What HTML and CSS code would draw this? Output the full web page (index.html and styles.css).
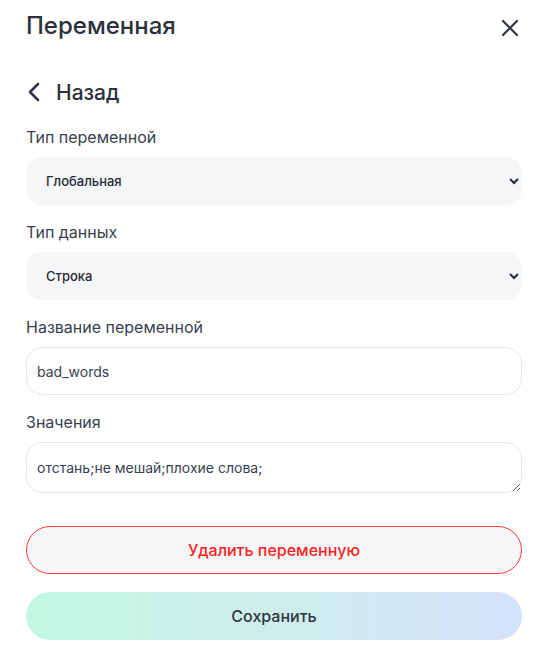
FILE: index.html
```html
<!DOCTYPE html>
<html lang="ru">
<head>
<meta charset="utf-8">
<link rel="stylesheet" href="styles.css">
</head>
<body>
<div class="panel">
  <div class="header">
    <h1 class="title">Переменная</h1>
    <button class="close" aria-label="Закрыть">
      <svg width="18" height="18" viewBox="0 0 18 18"><path d="M2 2L16 16M16 2L2 16" stroke="#2f3542" stroke-width="2.2" stroke-linecap="round" fill="none"/></svg>
    </button>
  </div>
  <div class="back">
    <svg width="14" height="20" viewBox="0 0 14 20"><path d="M11 2L3 10L11 18" stroke="#2f3542" stroke-width="2.6" stroke-linecap="round" stroke-linejoin="round" fill="none"/></svg>
    <span>Назад</span>
  </div>
  <div class="field">
    <label class="label">Тип переменной</label>
    <select class="select"><option>Глобальная</option></select>
  </div>
  <div class="field">
    <label class="label">Тип данных</label>
    <select class="select"><option>Строка</option></select>
  </div>
  <div class="field">
    <label class="label">Название переменной</label>
    <input class="input" type="text" value="bad_words">
  </div>
  <div class="field">
    <label class="label">Значения</label>
    <textarea class="textarea">отстань;не мешай;плохие слова;</textarea>
  </div>
  <div class="actions">
    <button class="btn btn-delete">Удалить переменную</button>
    <button class="btn btn-save">Сохранить</button>
  </div>
</div>
</body>
</html>
```
FILE: styles.css
```css
* { box-sizing: border-box; }
html, body { margin: 0; padding: 0; background: #ffffff; }
body { font-family: Inter, "Noto Sans", sans-serif; color: #2f3542; }
.panel { padding: 12px 25px 0 26px; display: flex; flex-direction: column; }
.header { display: flex; align-items: center; justify-content: space-between; height: 28px; }
.title { margin: 0; font-size: 24px; font-weight: 500; line-height: 28px; color: #2b303b; letter-spacing: 0; }
.close { border: none; background: none; padding: 0; width: 18px; height: 18px; margin-right: 3px; margin-top: 4px; display: flex; }
.back { display: flex; align-items: center; gap: 15px; margin-top: 40px; height: 24px; font-size: 21px; font-weight: 500; color: #2b303b; }
.back svg { margin-left: 1px; }
.field { display: flex; flex-direction: column; gap: 10px; margin-top: 17px; }
.back + .field { margin-top: 23px; }
.label { font-size: 16px; line-height: 20px; color: #394150; font-weight: 400; }
.select { width: 100%; height: 48px; border: none; border-radius: 16px; background: #f5f6f8; padding: 0 12px 0 16px; font-family: Inter, sans-serif; font-size: 13px; font-weight: 500; color: #262b35; outline: none; }
.input { width: 100%; height: 48px; border: 1px solid #e5e7ee; border-radius: 16px; background: #fff; padding: 0 10px; font-family: Inter, sans-serif; font-size: 14px; color: #374151; outline: none; }
.textarea { width: 100%; height: 51px; border: 1px solid #e5e7ee; border-radius: 16px; background: #fff; padding: 15px 10px 0; font-family: Inter, sans-serif; font-size: 14px; line-height: 20px; color: #374151; outline: none; resize: vertical; display: block; }
.actions { display: flex; flex-direction: column; gap: 18px; margin-top: 33px; }
.btn { width: 100%; height: 48px; border-radius: 24px; font-family: Inter, sans-serif; font-size: 16px; font-weight: 500; cursor: pointer; }
.btn-delete { background: #f6f7f9; border: 1px solid #ff3838; color: #ff2222; }
.btn-save { border: none; background: linear-gradient(90deg, #c2f9e3 0%, #cdeeea 45%, #d5e2fb 100%); color: #2f3542; }
```
